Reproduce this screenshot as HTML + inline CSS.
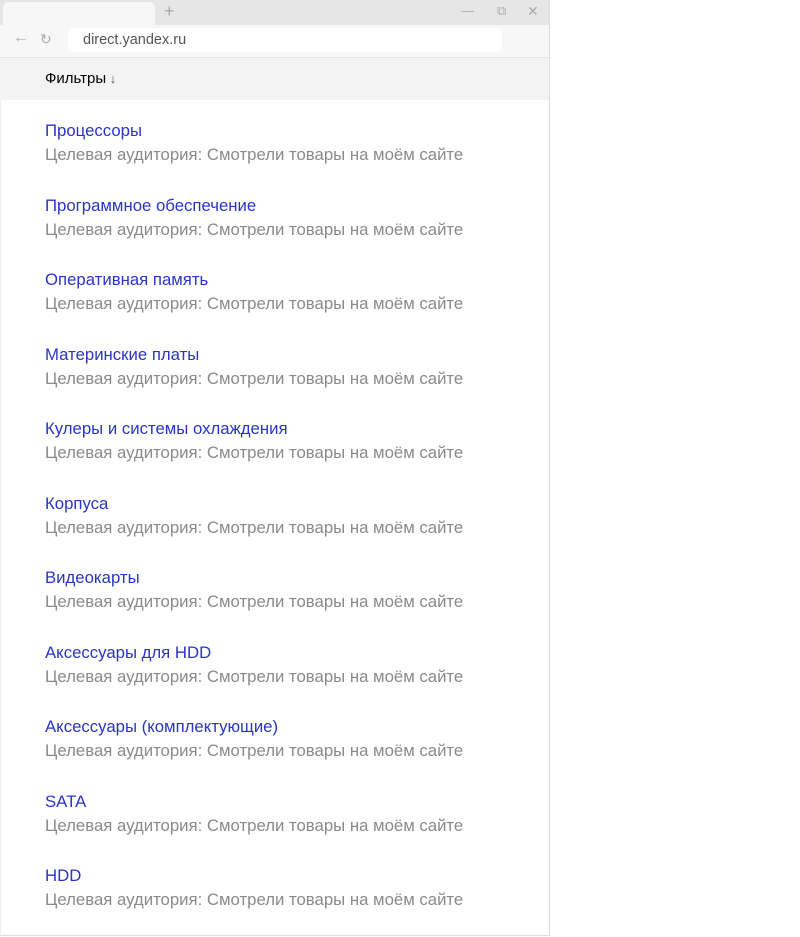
<!DOCTYPE html>
<html><head><meta charset="utf-8"><style>
body{margin:0;width:800px;height:937px;background:#fff;font-family:"Liberation Sans",sans-serif;position:relative;overflow:hidden}
.win{position:absolute;left:0;top:0;width:548px;height:935px;border-right:1px solid #ddd;border-bottom:1px solid #ddd;border-left:1px solid #eee}
.tabs{position:absolute;left:0;top:0;width:549px;height:25px;background:#e6e6e6}
.tab{position:absolute;left:3px;top:2px;width:152px;height:23px;background:#f7f7f7;border-radius:5px 5px 0 0}
.plus{position:absolute;left:164px;top:1px;color:#aaa;font-size:18px}
.ctl{position:absolute;top:3px;color:#aaa;font-size:13px}
.addr{position:absolute;left:0;top:25px;width:549px;height:32px;background:#f7f7f7;border-bottom:1px solid #e4e4e4}
.url{position:absolute;left:68px;top:3px;width:434px;height:24px;background:#fff;border-radius:5px;font-size:14.5px;color:#555;line-height:24px;padding-left:15px;box-sizing:border-box}
.nav{position:absolute;top:4px;color:#aaa;font-size:16px}
.filt{position:absolute;left:0;top:58px;width:549px;height:42px;background:#f3f3f3;font-size:15px;color:#000;line-height:42px;padding-left:45px;box-sizing:border-box}
.item{position:absolute;left:45px;font-size:16.75px;line-height:24px}
.t{color:#2a35c8}.s{color:#8a8a8a}
</style></head><body>
<div class="win"></div>
<div class="tabs"><div class="tab"></div><div class="plus">+</div>
<div class="ctl" style="left:461px">—</div><div class="ctl" style="left:497px">⧉</div><div class="ctl" style="left:527px;font-size:14px">✕</div></div>
<div class="addr"><span class="nav" style="left:13px">←</span><span class="nav" style="left:40px;font-size:14px;top:6px">↻</span><div class="url">direct.yandex.ru</div></div>
<div class="filt">Фильтры<span style="color:#556;font-size:13px"> ↓</span></div>
<div class="item" style="top:119px"><div class="t">Процессоры</div><div class="s">Целевая аудитория: Смотрели товары на моём сайте</div></div>
<div class="item" style="top:194px"><div class="t">Программное обеспечение</div><div class="s">Целевая аудитория: Смотрели товары на моём сайте</div></div>
<div class="item" style="top:268px"><div class="t">Оперативная память</div><div class="s">Целевая аудитория: Смотрели товары на моём сайте</div></div>
<div class="item" style="top:343px"><div class="t">Материнские платы</div><div class="s">Целевая аудитория: Смотрели товары на моём сайте</div></div>
<div class="item" style="top:417px"><div class="t">Кулеры и системы охлаждения</div><div class="s">Целевая аудитория: Смотрели товары на моём сайте</div></div>
<div class="item" style="top:492px"><div class="t">Корпуса</div><div class="s">Целевая аудитория: Смотрели товары на моём сайте</div></div>
<div class="item" style="top:566px"><div class="t">Видеокарты</div><div class="s">Целевая аудитория: Смотрели товары на моём сайте</div></div>
<div class="item" style="top:641px"><div class="t">Аксессуары для HDD</div><div class="s">Целевая аудитория: Смотрели товары на моём сайте</div></div>
<div class="item" style="top:715px"><div class="t">Аксессуары (комплектующие)</div><div class="s">Целевая аудитория: Смотрели товары на моём сайте</div></div>
<div class="item" style="top:790px"><div class="t">SATA</div><div class="s">Целевая аудитория: Смотрели товары на моём сайте</div></div>
<div class="item" style="top:864px"><div class="t">HDD</div><div class="s">Целевая аудитория: Смотрели товары на моём сайте</div></div>
</body></html>
